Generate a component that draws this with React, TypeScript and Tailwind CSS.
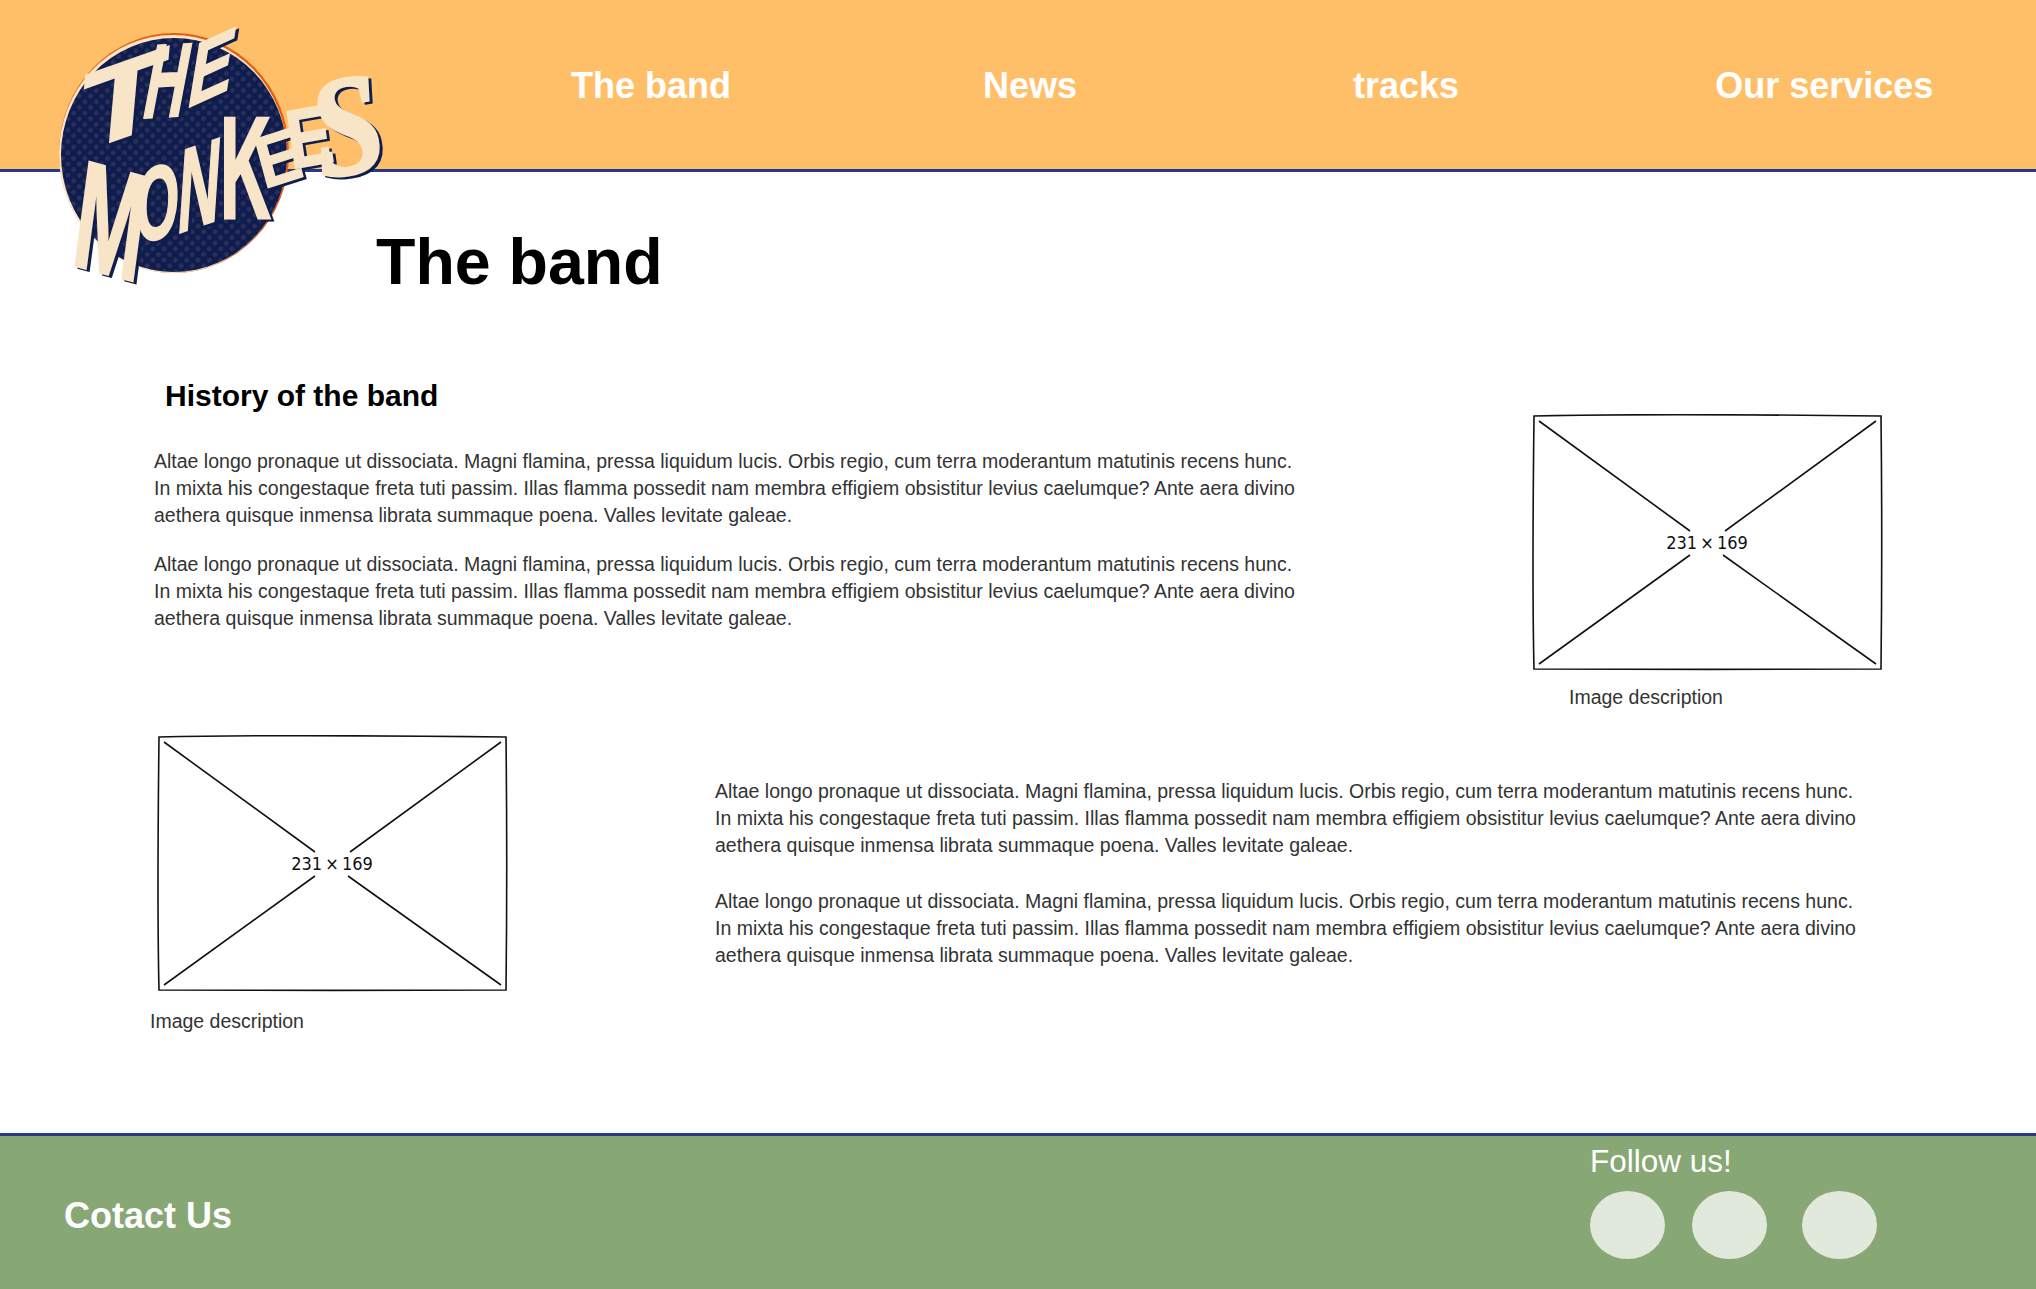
const LOREM_1 = 'Altae longo pronaque ut dissociata. Magni flamina, pressa liquidum lucis. Orbis regio, cum terra moderantum matutinis recens hunc.'
const LOREM_2 = 'In mixta his congestaque freta tuti passim. Illas flamma possedit nam membra effigiem obsistitur levius caelumque? Ante aera divino'
const LOREM_3 = 'aethera quisque inmensa librata summaque poena. Valles levitate galeae.'

const Paragraph = ({ className = '' }: { className?: string }) => (
  <p className={`text-[19.5px] leading-[27px] text-[#333] whitespace-nowrap ${className}`}>
    {LOREM_1}
    <br />
    {LOREM_2}
    <br />
    {LOREM_3}
  </p>
)

const Placeholder = () => (
  <svg width="352" height="258" viewBox="0 0 352 258" className="block" fill="none" stroke="#111" strokeWidth="1.6">
    <path d="M3 2 C90 0 260 1 350 2 C351 90 351 170 350 255 C260 256 90 255 3 255 C1 170 2 90 3 2 Z" />
    <path d="M8 7 L159 117 M345 7 L194 117 M8 250 L159 141 M345 250 L192 141" />
    <text
      x="176"
      y="135"
      textAnchor="middle"
      fill="#111"
      stroke="none"
      fontSize="18"
      fontStretch="condensed"
      wordSpacing="-2"
      fontFamily="'DejaVu Sans Condensed', 'DejaVu Sans', sans-serif"
    >
      231 × 169
    </text>
  </svg>
)

const Logo = () => {
  // each letter is set at 100px and then bent into place
  const letters = [
    ['T', 'matrix(1.39 -0.49 -0.1 1.12 78 153)'],
    ['H', 'matrix(0.58 -0.03 -0.2 1.05 140 118)'],
    ['E', 'matrix(0.66 -0.3 -0.15 0.92 185 109)'],
    ['M', 'matrix(0.82 0.22 -0.2 1.5 70 264)'],
    ['O', 'matrix(0.56 -0.08 -0.05 1.05 134 242)'],
    ['N', 'matrix(0.58 -0.2 -0.08 1.2 176 234)'],
    ['K', 'matrix(0.7 0 0 1.45 220 218)'],
    ['E', 'matrix(0.62 -0.2 0.19 0.7 264 189)'],
    ['E', 'matrix(0.67 -0.12 0.12 0.82 291 169)'],
  ]

  return (
    <svg width="360" height="300" viewBox="30 0 360 300" className="absolute left-[30px] top-0" aria-label="The Monkees">
      <defs>
        <pattern id="dots" width="8" height="8" patternUnits="userSpaceOnUse" patternTransform="rotate(45)">
          <rect width="8" height="8" fill="#0f1d4d" />
          <circle cx="4" cy="4" r="2.4" fill="#2c2f5c" />
        </pattern>
      </defs>
      <ellipse cx="174" cy="153" rx="115" ry="120" fill="#e85d10" />
      <ellipse cx="173" cy="154" rx="114" ry="119" fill="#f8e7cb" />
      <ellipse cx="174" cy="155" rx="113" ry="117" fill="url(#dots)" />
      <g
        fontFamily="'Liberation Sans', sans-serif"
        fontWeight="700"
        fontSize="100"
        fill="#f8e5c8"
        stroke="#f8e5c8"
        strokeWidth="2"
        className="drop-shadow-[3px_2px_0_#0f1d4d]"
      >
        {letters.map(([letter, transform], i) => (
          <text key={i} transform={transform}>
            {letter}
          </text>
        ))}
        <text transform="matrix(1.25 -0.2 0.3 1.4 322 178)" fontFamily="'Liberation Serif', serif" fontStyle="italic">
          S
        </text>
      </g>
    </svg>
  )
}

const App = () => {
  return (
    <div className="relative flex flex-col h-[1289px] overflow-hidden bg-white font-['Liberation_Sans',Arial,sans-serif]">
      <header className="flex items-center h-[172px] shrink-0 pl-[571px] pt-[2px] bg-[#ffbf69] border-b-[3px] border-[#28398c] text-white text-[36px] font-bold">
        <a>The band</a>
        <a className="ml-[252px]">News</a>
        <a className="ml-[276px]">tracks</a>
        <a className="ml-[256px]">Our services</a>
      </header>
      <Logo />

      <main className="flex-1">
        <h1 className="mt-[53px] ml-[376px] text-[64.5px] leading-[74px] font-bold text-black">The band</h1>

        <section className="flex mt-[80px] pl-[154px]">
          <div className="w-[1376px]">
            <h2 className="ml-[11px] text-[30px] leading-[34px] font-bold text-black">History of the band</h2>
            <Paragraph className="mt-[35px]" />
            <Paragraph className="mt-[22px]" />
          </div>
          <figure className="mt-[35px] ml-[1px]">
            <Placeholder />
            <figcaption className="mt-[12px] ml-[38px] text-[19.5px] leading-[27px] text-[#333]">Image description</figcaption>
          </figure>
        </section>

        <section className="flex mt-[24px] pl-[156px]">
          <figure>
            <Placeholder />
            <figcaption className="mt-[15px] -ml-[6px] text-[19.5px] leading-[27px] text-[#333]">Image description</figcaption>
          </figure>
          <div className="ml-[207px] mt-[43px]">
            <Paragraph />
            <Paragraph className="mt-[29px]" />
          </div>
        </section>
      </main>

      <footer className="flex h-[156px] shrink-0 bg-[#87a775] border-t-[3px] border-[#28398c] text-white">
        <div className="ml-[64px] mt-[59px] text-[36px] leading-[42px] font-bold">Cotact Us</div>
        <div className="ml-[1358px] mt-[7px]">
          <div className="text-[31.5px] leading-[37px]">Follow us!</div>
          <div className="flex mt-[11px]">
            <span className="w-[75px] h-[68px] rounded-[50%] bg-[#e1e9dd]" />
            <span className="w-[75px] h-[68px] ml-[27px] rounded-[50%] bg-[#e1e9dd]" />
            <span className="w-[75px] h-[68px] ml-[35px] rounded-[50%] bg-[#e1e9dd]" />
          </div>
        </div>
      </footer>
    </div>
  )
}

export default App
